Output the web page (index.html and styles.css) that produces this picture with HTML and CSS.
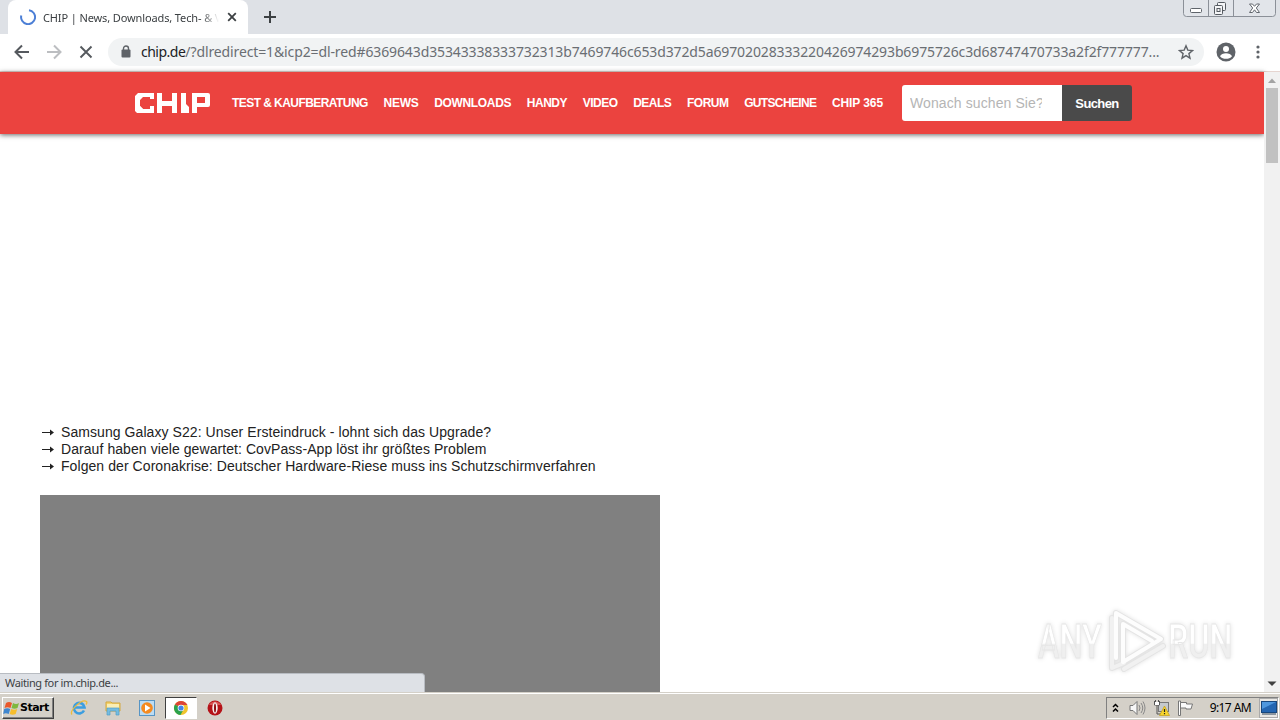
FILE: index.html
```html
<!DOCTYPE html>
<html lang="de">
<head>
  <meta charset="UTF-8">
  <title>CHIP | News, Downloads, Tech- &amp; Verbraucher-Tests</title>
  <link rel="stylesheet" href="styles.css">
</head>
<body>

<div class="tabstrip">
  <div class="tab">
    <svg class="spinner" width="16" height="16" viewBox="0 0 16 16"><path d="M9 1.2A7 7 0 1 1 1.3 6.4" fill="none" stroke="#4c7fd6" stroke-width="2"/></svg>
    <span class="tab-title">CHIP | News, Downloads, Tech- &amp; Ve</span>
    <svg width="10" height="10" viewBox="0 0 10 10"><path d="M1.2 1.2l7.6 7.6M8.8 1.2L1.2 8.8" stroke="#3c4043" stroke-width="1.8"/></svg>
  </div>
  <svg class="new-tab" width="12" height="12" viewBox="0 0 12 12"><path d="M6 0v12M0 6h12" stroke="#3c4043" stroke-width="2"/></svg>
  <svg class="window-buttons" width="94" height="18" viewBox="0 0 94 18">
    <path d="M.5 0v13.5q0 3 3 3h86q3 0 3-3V0M25.500 0v16M50.500 0v16" fill="#e2e5ea" stroke="#8b9098"/>
    <rect x="7.500" y="8.500" width="11" height="4" rx="1" fill="#fff" stroke="#5f646b"/>
    <g fill="#f4f5f7" stroke="#555a61"><rect x="34.500" y="2.500" width="8" height="8" rx="1"/><rect x="31.500" y="5.500" width="8" height="9" rx="1"/><rect x="34" y="8.500" width="3" height="3"/></g>
    <path d="M66.500 4l3 0 2 2.300 2-2.300 3 0-3.200 4 3.200 4.500-3 0-2-2.700-2 2.700-3 0 3.200-4.500z" fill="#fff" stroke="#62676e"/>
  </svg>
</div>

<div class="toolbar">
  <svg width="16" height="16" viewBox="0 0 16 16"><path d="M15 8H2M8 1.500L1.500 8 8 14.500" fill="none" stroke="#55595e" stroke-width="2"/></svg>
  <svg width="16" height="16" viewBox="0 0 16 16"><path d="M1 8h13M8 1.500L14.500 8 8 14.500" fill="none" stroke="#bcbec1" stroke-width="2"/></svg>
  <svg width="16" height="16" viewBox="0 0 16 16"><path d="M2.500 2.500l11 11M13.500 2.500l-11 11" stroke="#55595e" stroke-width="1.900"/></svg>
  <div class="omnibox">
    <svg width="10" height="13" viewBox="0 0 10 13"><path d="M2.500 5V3.500a2.500 2.500 0 0 1 5 0V5" fill="none" stroke="#5f6368" stroke-width="1.400"/><rect x=".5" y="4.500" width="9" height="8" rx="1" fill="#5f6368"/></svg>
    <span class="url"><b>chip.de</b>/?dlredirect=1&amp;icp2=dl-red#6369643d35343338333732313b7469746c653d372d5a69702028333220426974293b6975726c3d68747470733a2f2f777777...</span>
    <svg width="16" height="16" viewBox="0 0 16 16"><path d="M8 1.800l1.800 4.300 4.700.4-3.600 3.100 1.100 4.600L8 11.700l-4 2.500 1.100-4.600-3.600-3.100 4.700-.4z" fill="none" stroke="#5f6368" stroke-width="1.400"/></svg>
  </div>
  <svg class="profile" width="20" height="20" viewBox="0 0 20 20"><circle cx="10" cy="10" r="9.500" fill="#5f6368"/><circle cx="10" cy="7" r="3" fill="#fff"/><path d="M4 14.200c1.500-4 10.500-4 12 0-2.800 3.500-9.200 3.500-12 0z" fill="#fff"/></svg>
  <svg class="more" width="4" height="14" viewBox="0 0 4 14" fill="#5f6368"><circle cx="2" cy="2" r="1.600"/><circle cx="2" cy="7" r="1.600"/><circle cx="2" cy="12" r="1.600"/></svg>
</div>

<div class="viewport">
  <div class="page">
    <header class="header">
      <svg class="logo" width="76" height="21" viewBox="0 0 76 21" fill="#fff">
        <path d="M3 0h16v6h-4V4H8L5 7v6l3 3h7v-3h4v7H2l-2-2V3z"/>
        <path d="M5 13l5 5H4z"/>
        <path d="M22 0h5v8h10V0h5v20h-5v-7H27v7h-5z"/>
        <path d="M46 0h5v11l3 3v6h-8z"/>
        <path d="M57 0h16q2 0 2 2v10q0 2-2 2H62v6h-5zM62 4v6h8V4z" fill-rule="evenodd"/>
      </svg>
      <nav class="nav">
        <a class="kaufberatung">TEST &amp; KAUFBERATUNG</a>
        <a class="news">NEWS</a>
        <a class="downloads">DOWNLOADS</a>
        <a>HANDY</a>
        <a>VIDEO</a>
        <a>DEALS</a>
        <a>FORUM</a>
        <a class="gutscheine">GUTSCHEINE</a>
        <a class="chip365">CHIP 365</a>
      </nav>
      <div class="search">
        <div class="field"><span>Wonach suchen Sie?</span></div>
        <div class="submit">Suchen</div>
      </div>
    </header>
    <main class="content">
      <ul class="topnews">
        <li><svg class="arrow" width="12" height="7" viewBox="0 0 12 7"><path d="M0 3.500h9" stroke="#222"/><path d="M8 .5l4 3-4 3z" fill="#222"/></svg>Samsung Galaxy S22: Unser Ersteindruck - lohnt sich das Upgrade?</li>
        <li><svg class="arrow" width="12" height="7" viewBox="0 0 12 7"><path d="M0 3.500h9" stroke="#222"/><path d="M8 .5l4 3-4 3z" fill="#222"/></svg>Darauf haben viele gewartet: CovPass-App löst ihr größtes Problem</li>
        <li><svg class="arrow" width="12" height="7" viewBox="0 0 12 7"><path d="M0 3.500h9" stroke="#222"/><path d="M8 .5l4 3-4 3z" fill="#222"/></svg>Folgen der Coronakrise: Deutscher Hardware-Riese muss ins Schutzschirmverfahren</li>
      </ul>
      <div class="teaser"></div>
    </main>
  </div>
  <div class="scrollbar">
    <svg width="16" height="16" viewBox="0 0 16 16"><path d="M4 11l4-4.500 4 4.500z" fill="#a3a3a3"/></svg>
    <div class="thumb"></div>
    <svg width="16" height="16" viewBox="0 0 16 16"><path d="M3.500 5.500h9L8 10z" fill="#404040"/></svg>
  </div>
  <div class="status">Waiting for im.chip.de...</div>
  <svg class="watermark" width="220" height="76" viewBox="0 0 220 76">
    <defs>
      <linearGradient id="fade" x1="0" y1="0" x2="0" y2="1">
        <stop offset=".54" stop-color="#fff"/>
        <stop offset=".56" stop-color="#efefef"/>
      </linearGradient>
    </defs>
    <g font-family="Roboto, sans-serif" font-size="49" font-weight="500" fill="url(#fade)" stroke="#e6e6e6" stroke-width=".8">
      <text transform="translate(6 55) scale(.66 1)">ANY</text>
      <text transform="translate(136 55) scale(.66 1)">RUN</text>
    </g>
    <g fill="none" stroke-linejoin="round" stroke-linecap="round">
      <path d="M84 55V10l45 26-38 23V21l29 17M80 15v50l12-5M92 66l39-23" stroke="#e4e4e4" stroke-width="6"/>
      <path d="M80 15v50l12-5M92 66l39-23" stroke="#f1f1f1" stroke-width="4"/>
      <path d="M84 55V10l45 26-38 23V21l29 17" stroke="#fdfdfd" stroke-width="4"/>
    </g>
  </svg>
</div>

<div class="taskbar">
  <div class="start">
    <svg width="17" height="16" viewBox="0 0 17 16"><path d="M3 3q3-2 6 0L7.500 8q-3-1.500-6 0z" fill="#e9582b"/><path d="M10 3q3 2 6 0l-1.500 5q-3 1.500-6 0z" fill="#7fb83e"/><path d="M1.200 9q3-1.500 6 0l-1.500 5q-3-1.500-5.500 0z" fill="#3f86cf"/><path d="M8.200 9q3 1.500 6 0l-1.500 5q-3 1.500-6 0z" fill="#f6bd2b"/></svg>
    <span>Start</span>
  </div>
  <div class="quick">
    <svg width="18" height="18" viewBox="0 0 18 18"><path d="M14 11.500a5.300 5.300 0 1 1 .5-3H5" fill="none" stroke="#3c9ee0" stroke-width="2.600"/><path d="M2 15.500C-1 12 12-1 16.500 2.500c.8 1 .3 2-.5 3" fill="none" stroke="#edbc3c" stroke-width="1.300"/></svg>
    <svg width="18" height="18" viewBox="0 0 18 18"><path d="M2 3h5l1 1h8v8H2z" fill="#f4d36c" stroke="#d3a83e"/><path d="M3 5h12v5H3z" fill="#fbeeb4"/><path d="M3 16V9h12v7h-3v-4H6v4z" fill="#75bce0" stroke="#519dc7" stroke-width=".7"/></svg>
    <svg width="18" height="18" viewBox="0 0 18 18"><rect x="1.500" y="1.500" width="15" height="15" fill="#bcdcf3" stroke="#5795c5"/><circle cx="9" cy="9" r="5.800" fill="#f58a1f"/><path d="M7 5.500v7L12.500 9z" fill="#fff"/></svg>
  </div>
  <div class="task-active">
    <svg width="16" height="16" viewBox="0 0 16 16"><circle cx="8" cy="8" r="7" fill="#efc42e"/><path d="M8 8L1.900 4.500A7 7 0 0 1 14.100 4.500L14.500 5H8z" fill="#dc4437"/><path d="M1.900 4.500A7 7 0 0 0 7.500 15L10.500 9.500 8 8z" fill="#2ba24c"/><circle cx="8" cy="8" r="3.300" fill="#fff"/><circle cx="8" cy="8" r="2.600" fill="#4285e8"/></svg>
  </div>
  <svg class="opera" width="16" height="16" viewBox="0 0 16 16"><circle cx="8" cy="8" r="7.500" fill="#b51218"/><path d="M2 5a7 7 0 0 1 12 0z" fill="#d95555"/><ellipse cx="8" cy="8" rx="2.700" ry="5.700" fill="#f7eeee"/><ellipse cx="8" cy="8" rx="1" ry="4.500" fill="#8c0b10"/></svg>
  <div class="tray">
    <svg width="7" height="10" viewBox="0 0 7 10"><path d="M1 4l2.500-2.500L6 4M1 8.500L3.500 6 6 8.500" fill="none" stroke="#000" stroke-width="1.500"/></svg>
    <svg class="sound" width="17" height="16" viewBox="0 0 17 16"><path d="M1 5.500h3l4-4v13l-4-4H1z" fill="#f7f7f7" stroke="#777"/><path d="M10 5q2 3 0 6M12 3q3.500 5 0 10M14 1.500q4 6.500 0 13" fill="none" stroke="#888"/></svg>
    <svg class="network" width="17" height="16" viewBox="0 0 17 16"><rect x="5.500" y="2.500" width="10" height="9" fill="#c5c9cc" stroke="#777"/><path d="M1.500 1v4h5V1M4 5v9h4M2.500 0v2M5.500 0v2" fill="none" stroke="#555"/><path d="M2 2h4v3H2z" fill="#fff"/><path d="M11.500 6l5 9.500h-10z" fill="#f8d52e" stroke="#c39c14" stroke-width=".7"/><path d="M11.500 9v3M11.500 13v1.200" stroke="#222" stroke-width="1.200"/></svg>
    <svg class="flag" width="17" height="16" viewBox="0 0 17 16"><path d="M1.500 1v14.500h2V1z" fill="#fff" stroke="#777"/><path d="M3.500 2.500h6v1.500h6l-1.500 5h-5V8H3.500z" fill="#fafafa" stroke="#777"/></svg>
    <span class="clock">9:17 AM</span>
    <div class="desktop"><svg width="16" height="14" viewBox="0 0 16 14"><rect x=".5" y=".5" width="15" height="11" fill="#2466b1" stroke="#17477d"/><path d="M1 1h14L1 8z" fill="#4e97dd"/><path d="M1 13h14" stroke="#30465d"/></svg></div>
  </div>
</div>

</body>
</html>
```
FILE: styles.css
```css
* {
  box-sizing: border-box;
}

body {
  margin: 0;
  width: 1280px;
  height: 720px;
  overflow: hidden;
  display: flex;
  flex-direction: column;
  background: #fff;
  font-family: "Liberation Sans", Arial, sans-serif;
}

svg {
  display: block;
  flex: none;
}

/* browser window */
.tabstrip {
  height: 34px;
  flex: none;
  display: flex;
  padding-left: 8px;
  background: #dee1e6;
}

.tab {
  width: 240px;
  display: flex;
  align-items: center;
  padding: 0 11px 0 12px;
  background: #fff;
  border-radius: 8px 8px 0 0;
}

.tab-title {
  width: 176px;
  margin: 0 8px 0 7px;
  overflow: hidden;
  white-space: nowrap;
  font: 11px "Noto Sans", sans-serif;
  letter-spacing: -0.12px;
  color: #3c4043;
  -webkit-mask-image: linear-gradient(90deg, #000 90%, transparent);
  mask-image: linear-gradient(90deg, #000 90%, transparent);
}

.new-tab {
  margin: 11px 0 0 16px;
}

.window-buttons {
  margin: 0 3px 0 auto;
}

.toolbar {
  height: 38px;
  flex: none;
  display: flex;
  align-items: center;
  gap: 16px;
  padding: 0 20px 2px 14px;
  border-bottom: 1px solid #e6d5d0;
}

.omnibox {
  width: 1096px;
  height: 28px;
  margin-left: -2px;
  display: flex;
  align-items: center;
  padding: 0 10px 0 13px;
  border-radius: 14px;
  background: #f1f3f4;
}

.url {
  width: 1031px;
  margin: 0 6px 0 10px;
  white-space: nowrap;
  font: 14px "Noto Sans", sans-serif;
  letter-spacing: -0.12px;
  color: #6a6e73;
}

.url b {
  font-weight: normal;
  letter-spacing: -0.5px;
  color: #202124;
}

.profile {
  margin-left: -4px;
}

.more {
  margin-left: 4px;
}

.viewport {
  height: 620px;
  flex: none;
  display: flex;
  position: relative;
}

.page {
  width: 1264px;
  display: flex;
  flex-direction: column;
}

/* site header */
.header {
  height: 62px;
  flex: none;
  display: flex;
  align-items: center;
  padding-left: 135px;
  background: #eb433f;
  box-shadow: 0 1px 5px rgba(0, 0, 0, 0.6);
}

.nav {
  width: 651px;
  margin-left: 21px;
  display: flex;
  justify-content: space-between;
  color: #fff;
  font-size: 12px;
  font-weight: bold;
  letter-spacing: -0.5px;
  white-space: nowrap;
}

.nav .kaufberatung {
  letter-spacing: -0.56px;
}

.nav .news {
  letter-spacing: -0.25px;
}

.nav .downloads {
  letter-spacing: -0.33px;
}

.nav .gutscheine {
  letter-spacing: -0.65px;
}

.nav .chip365 {
  letter-spacing: -0.1px;
}

.search {
  display: flex;
  margin-left: 19px;
}

.field {
  width: 160px;
  height: 36px;
  padding: 0 20px 0 8px;
  background: #fff;
  border-radius: 3px 0 0 3px;
  color: #b5b5b5;
  font-size: 14px;
  line-height: 36px;
}

.field span {
  display: block;
  overflow: hidden;
  white-space: nowrap;
  letter-spacing: 0.1px;
}

.submit {
  width: 70px;
  height: 36px;
  border-radius: 0 3px 3px 0;
  background: #4a4a4a;
  color: #fff;
  font-size: 13px;
  font-weight: bold;
  letter-spacing: -0.6px;
  line-height: 37px;
  text-align: center;
}

.content {
  padding: 290px 0 0 40px;
}

.topnews {
  margin: 0;
  padding: 0;
  list-style: none;
  color: #222;
  font-size: 14px;
  letter-spacing: 0.07px;
  line-height: 17px;
}

.topnews li {
  display: flex;
  align-items: center;
  height: 17px;
  white-space: nowrap;
}

.arrow {
  margin: 0 7px 0 2px;
}

.teaser {
  width: 620px;
  height: 197px;
  margin-top: 20px;
  background: #808080;
}

.scrollbar {
  width: 16px;
  height: 620px;
  display: flex;
  flex-direction: column;
  align-items: center;
  background: #f1f1f1;
}

.thumb {
  width: 12px;
  height: 75px;
  margin-bottom: auto;
  background: #c1c1c1;
}

.status {
  position: absolute;
  left: 0;
  bottom: 0;
  width: 425px;
  height: 19px;
  padding-left: 5px;
  border: 1px solid #b8bcc2;
  border-width: 1px 1px 0 0;
  border-radius: 0 4px 0 0;
  background: #dee1e6;
  color: #3c4043;
  font: 11px/18px "Noto Sans", sans-serif;
  letter-spacing: -0.38px;
}

.watermark {
  position: absolute;
  left: 1032px;
  top: 531px;
  filter: drop-shadow(0 0 2px rgba(0, 0, 0, 0.12));
}

/* windows taskbar */
.taskbar {
  height: 28px;
  flex: none;
  display: flex;
  align-items: center;
  padding: 2px 1px 0 2px;
  background: #d4d0c8;
  border-top: 1px solid #d4d0c8;
  box-shadow: inset 0 1px #fff;
}

.start {
  width: 52px;
  height: 22px;
  display: flex;
  align-items: center;
  border: 1px solid;
  border-color: #fff #404040 #404040 #fff;
  box-shadow: inset -1px -1px #808080;
  font: bold 11px "DejaVu Sans", sans-serif;
  letter-spacing: -0.5px;
  color: #000;
}

.quick {
  display: flex;
  gap: 16px;
  margin: 0 9px 0 16px;
}

.task-active {
  width: 32px;
  height: 22px;
  display: flex;
  align-items: center;
  justify-content: center;
  background: #fff;
  border: 1px solid;
  border-color: #404040 #fff #fff #404040;
}

.opera {
  margin-left: 10px;
}

.tray {
  width: 173px;
  height: 22px;
  margin-left: auto;
  display: flex;
  align-items: center;
  padding-left: 5px;
  border: 1px solid;
  border-color: #808080 #fff #fff #808080;
}

.sound {
  margin-left: 10px;
}

.network {
  margin-left: 7px;
}

.flag {
  margin-left: 7px;
}

.clock {
  margin-left: auto;
  white-space: nowrap;
  font: 12px "Noto Sans", sans-serif;
  letter-spacing: -0.6px;
  color: #000;
}

.desktop {
  width: 19px;
  height: 20px;
  margin-left: 8px;
  display: flex;
  align-items: center;
  justify-content: center;
  background: #e9e7e3;
  border: 1px solid #aaa;
}
```
